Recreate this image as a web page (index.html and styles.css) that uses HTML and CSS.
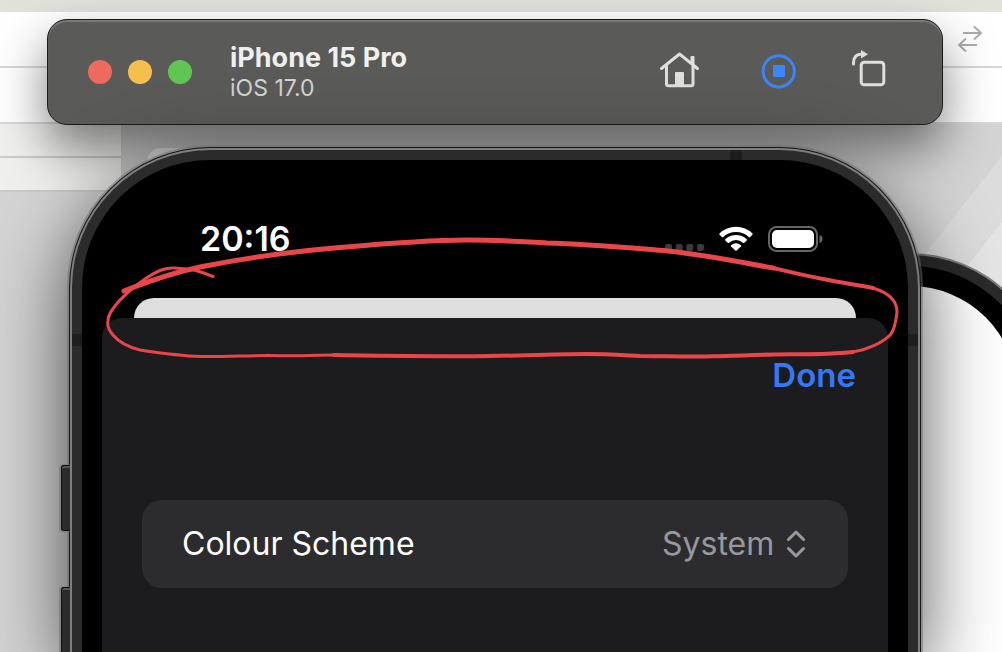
FILE: index.html
```
<!DOCTYPE html>
<html lang="en">
<head>
  <meta charset="UTF-8">
  <title>iPhone 15 Pro – iOS 17.0</title>
  <meta name="viewport" content="width=device-width, initial-scale=1.0">
  <link rel="stylesheet" href="styles.css">
</head>
<body>
  <div class="desktop">

    <!-- editor window behind the simulator -->
    <div class="backdrop">
      <div class="strip"></div>
      <div class="tabs">
        <svg class="swap" viewBox="0 0 28 28" aria-hidden="true">
          <path d="M7 8H25M18 1.5L25 8L18 14.5M21 20H3M10 13.5L3 20L10 26.5"/>
        </svg>
      </div>
      <div class="crumbs"></div>
      <div class="editor">
        <div class="sidebar">
          <div class="side-row"></div>
          <div class="side-row"></div>
        </div>
        <div class="canvas">
          <div class="panel"></div>
        </div>
      </div>
    </div>

    <div class="phone-back"><div class="phone-back-bezel"><div class="phone-back-screen"></div></div></div>

    <div class="simulator">
      <header class="toolbar">
        <div class="lights">
          <button class="light red" aria-label="Close"></button>
          <button class="light yellow" aria-label="Minimise"></button>
          <button class="light green" aria-label="Zoom"></button>
        </div>
        <div class="titles">
          <h1>iPhone 15 Pro</h1>
          <p>iOS 17.0</p>
        </div>
        <div class="actions">
          <button class="action" aria-label="Home">
            <svg viewBox="0 0 48 48">
              <path d="M5.5 20.5L23.5 6L41.5 20.5M10.5 17V36Q10.5 37.7 12.5 37.7H35Q37 37.7 37 36V17"/>
              <path class="solid" d="M34.5 9Q34.5 8 35.5 8H37.5Q38.5 8 38.5 9V18L34.5 15ZM19 25Q19 24 20 24H27Q28 24 28 25V38H19Z"/>
            </svg>
          </button>
          <button class="action stop" aria-label="Stop">
            <svg viewBox="0 0 48 48">
              <circle cx="26.7" cy="23.3" r="15.6"/>
              <rect class="solid" x="21" y="17" width="12" height="12" rx="1"/>
            </svg>
          </button>
          <button class="action" aria-label="Rotate">
            <svg viewBox="0 0 48 48">
              <rect x="13.2" y="14.2" width="22.6" height="22.6" rx="3"/>
              <path d="M5.5 16V15Q5.5 6 14 6"/>
              <path class="solid" d="M13 2L20 6.2L13 10.5Z"/>
            </svg>
          </button>
        </div>
      </header>

      <main class="phone">
        <span class="side-button upper"></span>
        <span class="side-button lower"></span>
        <span class="band band-top"></span>
        <span class="band band-left"></span>
        <span class="band band-right"></span>

        <div class="bezel">
          <div class="status">
            <time>20:16</time>
            <div class="status-icons">
              <svg class="signal" viewBox="0 0 39 26">
                <rect x="0" y="18" width="7" height="7" rx="2"/>
                <rect x="10.7" y="18" width="7" height="7" rx="2"/>
                <rect x="21.3" y="18" width="7" height="7" rx="2"/>
                <rect x="32" y="18" width="7" height="7" rx="2"/>
              </svg>
              <svg class="wifi" viewBox="0 0 34 26">
                <path d="M0.5 7.5Q7.5 0.8 17 0.8T33.5 7.5Q34 8.2 33.4 8.8L31.2 10.9Q30.5 11.5 29.8 10.9Q24.5 5.9 17 5.9T4.2 10.9Q3.5 11.5 2.8 10.9L0.6 8.8Q0 8.2 0.5 7.5Z"/>
                <path d="M6.3 13.2Q11 9 17 9T27.7 13.2Q28.3 13.9 27.7 14.5L25.3 16.8Q24.6 17.4 23.9 16.8Q21 14.1 17 14.1T10.1 16.8Q9.4 17.4 8.7 16.8L6.3 14.5Q5.7 13.9 6.3 13.2Z"/>
                <path d="M12.2 19.1Q14.3 17.2 17 17.2T21.8 19.1Q22.4 19.7 21.8 20.4L17.7 24.5Q17 25.2 16.3 24.5L12.2 20.4Q11.6 19.7 12.2 19.1Z"/>
              </svg>
              <svg class="battery" viewBox="0 0 55 26">
                <rect class="shell" x="1" y="1" width="48" height="24" rx="7.5"/>
                <rect x="4" y="4" width="42" height="18" rx="5"/>
                <path class="cap" d="M51.5 9Q54.5 10 54.5 13T51.5 17Z"/>
              </svg>
            </div>
          </div>

          <div class="card-behind"></div>
          <section class="sheet">
            <div class="sheet-nav">
              <button class="done">Done</button>
            </div>
            <div class="setting">
              <label for="scheme">Colour Scheme</label>
              <div class="picker">
                <select id="scheme">
                  <option>System</option>
                  <option>Light</option>
                  <option>Dark</option>
                </select>
                <svg viewBox="0 0 18 28" aria-hidden="true">
                  <path d="M1.5 9.5L9 2L16.5 9.5M1.5 18.5L9 26L16.5 18.5"/>
                </svg>
              </div>
            </div>
          </section>
        </div>
      </main>
    </div>

    <!-- hand-drawn red marker -->
    <svg class="marker" viewBox="0 0 1002 652" preserveAspectRatio="xMidYMin meet" aria-hidden="true">
      <path class="thick" d="M124 291C146 282 172 273 200 267C244 258 290 252 334 248C380 244 425 240 467 240C500 240 525 242 547 243C590 244 630 248 668 251C706 255 740 262 773 268"/>
      <path class="medium" d="M773 268C790 272 806 276 823 279C842 283 860 285 873 288"/>
      <path class="thin" d="M873 288C886 292 897 299 897 312C896 322 895 328 891 334C883 343 866 350 853 352"/>
      <path class="medium" d="M853 352C826 355 800 354 773 354.5C750 355 732 356 713 356.3C690 357 663 356 640 356C620 355 605 354 587 354C550 354 512 356 474 356.3C426 356 380 356 334 355"/>
      <path class="thin" d="M334 355C315 355 298 356 280 355.7C250 355 230 357 200 356.5C180 356 160 353 140 350C128 347 118 341 113 335C108 329 107 325 108 321C108 315 111 311 115 306C122 297 129 291 137 285C147 277 158 270 167 268.5C175 267 183 269 190 269.5C198 270 206 274 213 276.5"/>
    </svg>
  </div>
</body>
</html>
```
FILE: styles.css
```
:root {
  --frame: #2b2b2b;
  --edge: #7e7e7e;
  --sheet: #1c1c1e;
  --row: #2c2c2e;
  --blue: #3478f6;
  --bar: #5a5a58;
  --bar-icon: #dededc;
}

* {
  box-sizing: border-box;
}

body {
  margin: 0;
  font-family: Inter, "Liberation Sans", sans-serif;
}

h1, p {
  margin: 0;
}

button {
  padding: 0;
  border: none;
  background: none;
  font: inherit;
  cursor: pointer;
}

svg {
  display: block;
}

.desktop {
  position: relative;
  min-height: 100vh;
  display: flex;
  overflow: hidden;
}

/* editor window */
.backdrop {
  position: absolute;
  inset: 0;
  display: flex;
  flex-direction: column;
  background: #fff;
}

.strip {
  height: 12px;
  background: #e1e1de;
}

.tabs,
.crumbs {
  height: 56px;
  border-bottom: 2px solid #d8d8d8;
}

.tabs {
  display: flex;
  justify-content: flex-end;
  padding: 13px 18px 0;
}

.swap {
  width: 28px;
  height: 28px;
  fill: none;
  stroke: #acacac;
  stroke-width: 2;
}

.editor {
  flex: 1;
  display: flex;
  background: #d4d4d4;
}

.sidebar {
  width: 122px;
}

.side-row {
  height: 34px;
  background: #f0f0ee;
  border-bottom: 2px solid #cbcbcb;
  border-right: 1px solid #d2d2d2;
}

.canvas {
  flex: 1;
  padding: 24px 200px 0 25px;
  background: linear-gradient(128deg, #d4d4d4 70%, #dcdcdc 70%, #dcdcdc 74%, #e5e5e5 74%);
}

.panel {
  height: 60px;
  border-radius: 14px;
  background: #f2f2f2;
}

/* second phone, partly hidden */
.phone-back {
  position: absolute;
  top: 253px;
  right: -48px;
  bottom: 0;
  width: 400px;
  padding: 11px 11px 0;
  border: 2px solid var(--edge);
  border-bottom: 0;
  border-radius: 140px 140px 0 0;
  background: var(--frame);
}

.phone-back-bezel {
  height: 100%;
  padding: 20px 20px 0;
  border-radius: 127px 127px 0 0;
  background: #000;
}

.phone-back-screen {
  height: 100%;
  border-radius: 107px 107px 0 0;
  background: #fff;
}

/* simulator */
.simulator {
  position: relative;
  flex: 1;
  display: flex;
  flex-direction: column;
  gap: 23px;
  padding-top: 19px;
}

.toolbar {
  position: relative;
  display: flex;
  align-items: center;
  height: 106px;
  margin: 0 59px 0 47px;
  padding: 0 46px 0 40px;
  border: 1px solid #1c1c1c;
  border-radius: 20px;
  background: var(--bar);
  box-shadow: inset 0 2px 1px #7b7b79, 0 24px 50px rgba(0, 0, 0, 0.5);
}

.lights {
  display: flex;
  gap: 16px;
}

.light {
  width: 24px;
  height: 24px;
  border-radius: 50%;
}

.red {
  background: #ed6a5e;
}

.yellow {
  background: #f5bf4f;
}

.green {
  background: #61c554;
}

.titles {
  flex: 1;
  margin-left: 38px;
}

.titles h1 {
  font-size: 27px;
  line-height: 32px;
  font-weight: 700;
  color: #efefee;
}

.titles p {
  font-size: 23px;
  line-height: 28px;
  color: #d2d2d0;
}

.actions {
  display: flex;
  gap: 48px;
}

.action {
  width: 48px;
  height: 48px;
  color: var(--bar-icon);
}

.action svg {
  fill: none;
  stroke: currentColor;
  stroke-width: 3;
  stroke-linecap: round;
  stroke-linejoin: round;
}

.action .solid {
  fill: currentColor;
  stroke: none;
}

.stop {
  color: #3c84f7;
}

.phone {
  position: relative;
  flex: 1;
  display: flex;
  margin: 0 82px 0 70px;
  padding: 10px 10px 0;
  border: 2px solid var(--edge);
  border-bottom: 0;
  border-radius: 140px 140px 0 0;
  background: var(--frame);
  box-shadow: 0 0 0 1px #161616, 0 0 0 3px rgba(110, 110, 110, 0.5), 0 24px 80px rgba(0, 0, 0, 0.7);
}

.side-button {
  position: absolute;
  left: -11px;
  width: 9px;
  height: 66px;
  border: 1px solid #111;
  border-right: 0;
  border-radius: 3px 0 0 3px;
  background: var(--frame);
  box-shadow: inset 0 2px 0 #555, -1px 0 0 1px rgba(110, 110, 110, 0.5);
}

.upper {
  top: 315px;
}

.lower {
  top: 437px;
  height: 130px;
}

.band {
  position: absolute;
  width: 10px;
  height: 12px;
  background: #1e1e1e;
}

.band-top {
  top: 0;
  right: 176px;
  width: 12px;
  height: 10px;
}

.band-left {
  top: 184px;
  left: 0;
}

.band-right {
  top: 184px;
  right: 0;
}

.bezel {
  flex: 1;
  display: flex;
  flex-direction: column;
  padding: 0 20px;
  border-radius: 128px 128px 0 0;
  background: #000;
}

.status {
  display: flex;
  justify-content: space-between;
  align-items: center;
  height: 138px;
  padding: 20px 65px 0 98px;
  color: #fff;
}

.status time {
  font-size: 34px;
  line-height: 40px;
  font-weight: 600;
}

.status-icons {
  display: flex;
  gap: 15px;
}

.status-icons svg {
  height: 26px;
  fill: #fff;
}

.status-icons .signal {
  width: 39px;
  fill: #3a3a3a;
}

.wifi {
  width: 34px;
}

.battery {
  width: 55px;
}

.battery .shell {
  fill: none;
  stroke: #666;
  stroke-width: 2;
}

.battery .cap {
  fill: #666;
}

.card-behind {
  height: 20px;
  margin: 0 32px;
  border-radius: 20px 20px 0 0;
  background: #dedede;
}

.sheet {
  flex: 1;
  border-radius: 20px 20px 0 0;
  background: var(--sheet);
}

.sheet-nav {
  display: flex;
  justify-content: flex-end;
  align-items: center;
  height: 114px;
  padding: 0 32px;
}

.done {
  font-size: 33px;
  line-height: 40px;
  font-weight: 600;
  color: var(--blue);
}

.setting {
  display: flex;
  justify-content: space-between;
  align-items: center;
  height: 88px;
  margin: 68px 40px 0;
  padding: 0 43px 0 40px;
  border-radius: 20px;
  background: var(--row);
  font-size: 32px;
  line-height: 40px;
  color: #fff;
}

.picker {
  display: flex;
  align-items: center;
  gap: 12px;
}

.picker select {
  appearance: none;
  padding: 0;
  border: none;
  background: none;
  font: inherit;
  color: #98989f;
}

.picker svg {
  width: 18px;
  height: 28px;
  fill: none;
  stroke: #98989f;
  stroke-width: 3;
  stroke-linecap: round;
  stroke-linejoin: round;
}

.marker {
  position: absolute;
  top: 0;
  left: 0;
  width: 100%;
  fill: none;
  stroke: #e9464b;
  stroke-linecap: round;
  pointer-events: none;
}

.thick {
  stroke-width: 5;
}

.medium {
  stroke-width: 4;
}

.thin {
  stroke-width: 3;
}
```
